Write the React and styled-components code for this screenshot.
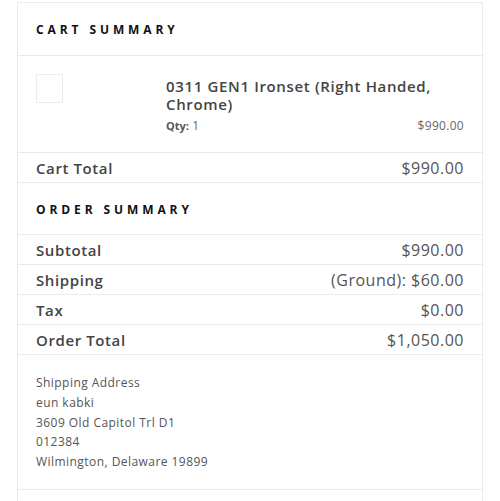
import React from "react";
import styled, { createGlobalStyle } from "styled-components";

const GlobalStyle = createGlobalStyle`
  body {
    margin: 0;
    background: #fff;
    font-family: "Open Sans", "Liberation Sans", sans-serif;
    color: #444;
  }
`;

const cartItems = [
  {
    id: 1,
    name: "0311 GEN1 Ironset (Right Handed, Chrome)",
    qty: 1,
    price: "$990.00",
  },
];

const orderRows = [
  { label: "Subtotal", value: "$990.00" },
  { label: "Shipping", value: "(Ground): $60.00" },
  { label: "Tax", value: "$0.00" },
  { label: "Order Total", value: "$1,050.00" },
];

const address = [
  "Shipping Address",
  "eun kabki",
  "3609 Old Capitol Trl D1",
  "012384",
  "Wilmington, Delaware 19899",
];

export default function App() {
  return (
    <>
      <GlobalStyle />
      <SPage>
        <SPanel>
          <SHeading>Cart Summary</SHeading>
          {cartItems.map((item) => (
            <SItem key={item.id}>
              <SThumb />
              <SItemInfo>
                <SItemName>{item.name}</SItemName>
                <SItemMeta>
                  <span>
                    <b>Qty:</b> {item.qty}
                  </span>
                  <span>{item.price}</span>
                </SItemMeta>
              </SItemInfo>
            </SItem>
          ))}
          <SRow>
            <SLabel>Cart Total</SLabel>
            <SValue>$990.00</SValue>
          </SRow>
          <SHeading $small>Order Summary</SHeading>
          {orderRows.map((row) => (
            <SRow key={row.label}>
              <SLabel>{row.label}</SLabel>
              <SValue>{row.value}</SValue>
            </SRow>
          ))}
          <SAddress>
            {address.map((line) => (
              <div key={line}>{line}</div>
            ))}
          </SAddress>
          <SFooter />
        </SPanel>
      </SPage>
    </>
  );
}

const SPage = styled.div`
  padding: 2px 17px 0;
`;

const SPanel = styled.div`
  border: 1px solid #ebebeb;
  border-bottom: none;
`;

const SHeading = styled.h2`
  margin: 0;
  padding: 1px 18px 0;
  height: ${(p) => (p.$small ? "50px" : "51px")};
  display: flex;
  align-items: center;
  font-size: 12px;
  font-weight: 700;
  letter-spacing: 3.9px;
  text-transform: uppercase;
  color: #111;
  border-bottom: 1px solid #ebebeb;
`;

const SItem = styled.div`
  display: flex;
  padding: 18px 18px 0;
  height: 78px;
  border-bottom: 1px solid #ebebeb;
`;

const SThumb = styled.div`
  width: 25px;
  height: 27px;
  border: 1px solid #ececec;
  flex-shrink: 0;
`;

const SItemInfo = styled.div`
  flex: 1;
  margin-left: 103px;
  padding-top: 3px;
`;

const SItemName = styled.div`
  font-size: 15px;
  font-weight: 600;
  line-height: 18px;
  letter-spacing: 0.65px;
  color: #444;
`;

const SItemMeta = styled.div`
  display: flex;
  justify-content: space-between;
  margin-top: 4px;
  font-size: 12px;
  letter-spacing: 0.3px;
  color: #666;

  b {
    font-weight: 700;
    color: #555;
    font-size: 11px;
    letter-spacing: 0;
  }
`;

const SRow = styled.div`
  display: flex;
  justify-content: space-between;
  align-items: center;
  height: 29px;
  padding: 0 18px;
  border-bottom: 1px solid #ebebeb;
`;

const SLabel = styled.span`
  font-size: 15px;
  font-weight: 600;
  letter-spacing: 0.6px;
  color: #444;
`;

const SValue = styled.span`
  font-size: 16px;
  letter-spacing: 0.5px;
  color: #555;
`;

const SAddress = styled.div`
  padding: 18px 18px 17px;
  font-size: 12px;
  line-height: 19.8px;
  letter-spacing: 0.45px;
  color: #555;
  border-bottom: 1px solid #ebebeb;
`;

const SFooter = styled.div`
  height: 20px;
`;
